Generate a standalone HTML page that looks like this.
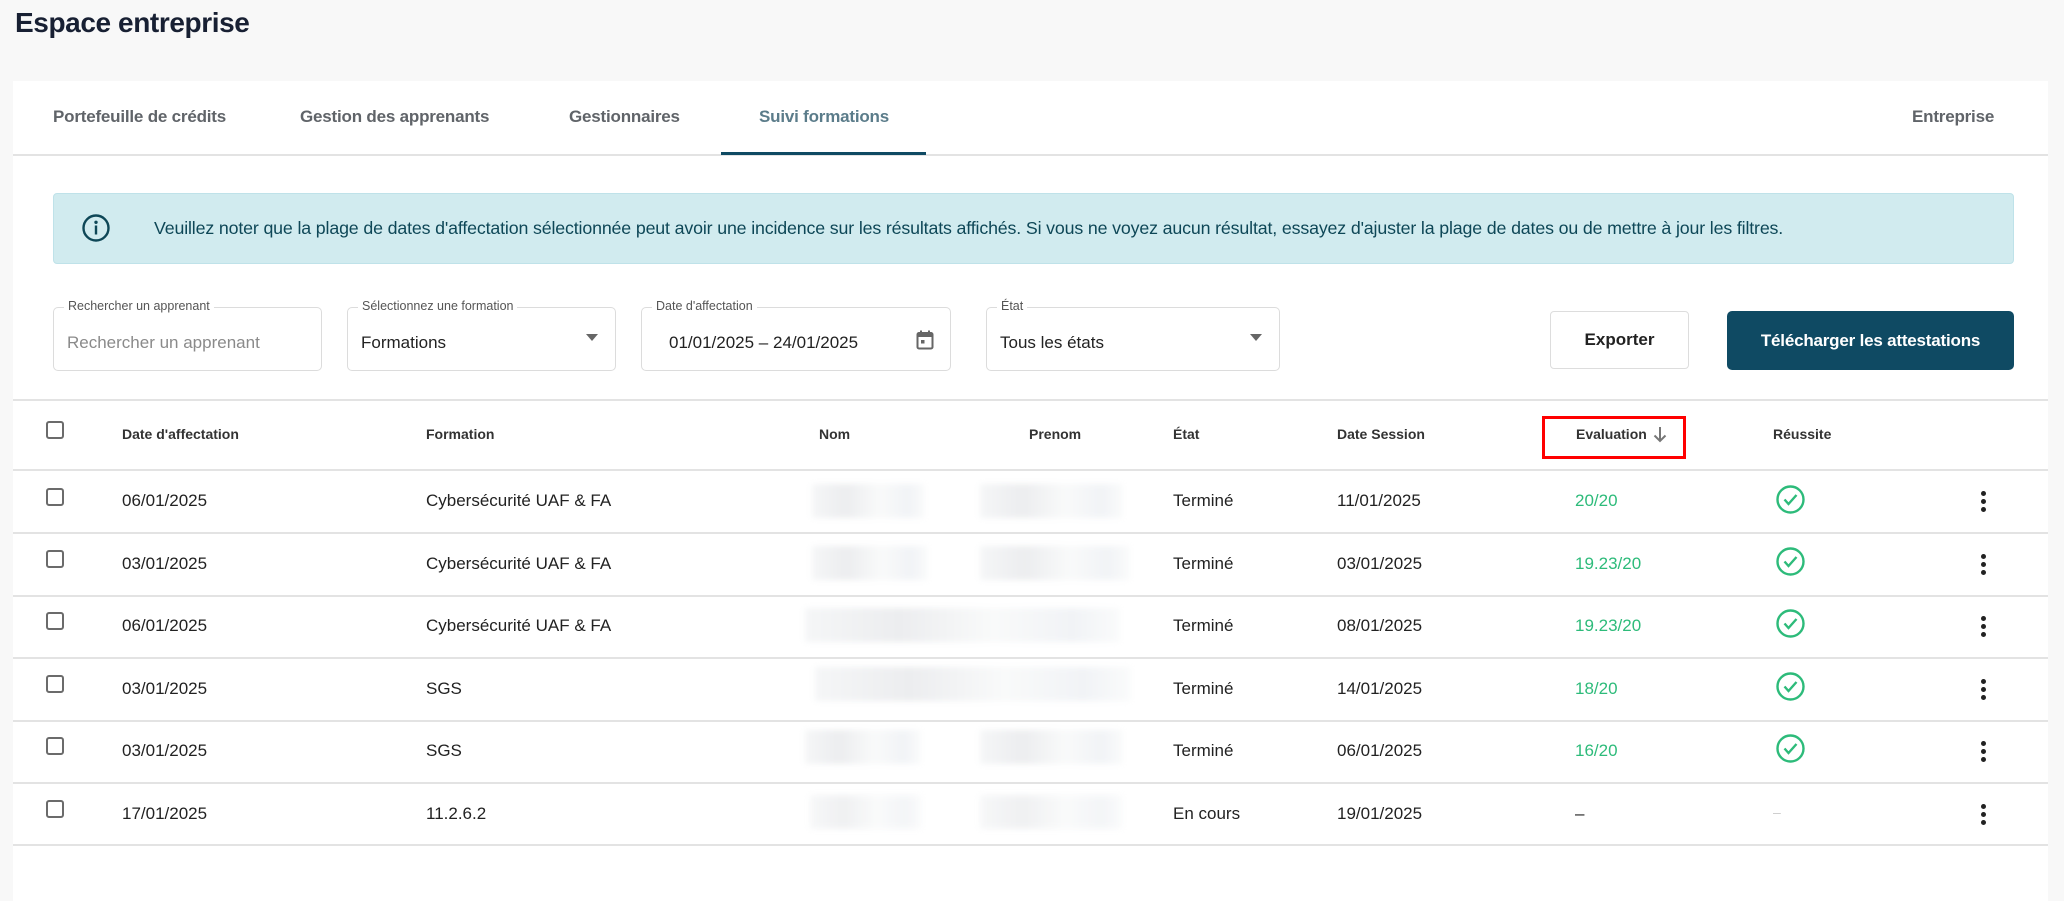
<!DOCTYPE html>
<html><head><meta charset="utf-8"><style>
*{box-sizing:border-box;margin:0;padding:0}
body{width:2064px;height:881px;background:#f8f8f8;font-family:"Liberation Sans",sans-serif;position:relative;overflow:hidden;color:#212121}
.a{position:absolute;white-space:nowrap}
.card{position:absolute;left:13px;top:81px;width:2035px;height:820px;background:#fff}
.tab{position:absolute;top:107px;font-size:17px;color:#606469;font-weight:bold;letter-spacing:-0.2px}
.box{position:absolute;top:307px;height:64px;border:1px solid #dcdcdc;border-radius:5px;background:#fff}
.lbl{position:absolute;top:-9px;left:10px;background:#fff;padding:0 4px;font-size:12.5px;color:#555}
.val{position:absolute;top:25px;left:13px;font-size:17px;color:#222}
.hd{position:absolute;top:426px;font-size:14px;font-weight:bold;color:#333}
.line{position:absolute;left:13px;width:2035px;height:2px;background:#e3e3e3}
.cell{position:absolute;font-size:17px;color:#222}
.cb{position:absolute;left:46px;width:18px;height:18px;border:2px solid #6b6b6b;border-radius:3px}
.g{color:#2dbb7a}
.blur{position:absolute;height:34px;background:linear-gradient(90deg,#f5f6f7,#ecedef 30%,#f9fafa 60%,#f1f3f6 85%,#fafbfb);filter:blur(3px)}
.dots{position:absolute;left:1981px;width:5px}
.dots i{display:block;width:5px;height:5px;border-radius:50%;background:#222;margin-bottom:3px}
</style></head><body>
<div class="a" style="left:15px;top:7px;font-size:28px;font-weight:bold;color:#182033;letter-spacing:-0.4px">Espace entreprise</div>
<div class="card"></div>
<div class="tab" style="left:53px">Portefeuille de crédits</div>
<div class="tab" style="left:300px">Gestion des apprenants</div>
<div class="tab" style="left:569px">Gestionnaires</div>
<div class="tab" style="left:759px;color:#5b7c8a">Suivi formations</div>
<div class="tab" style="left:1912px">Entreprise</div>
<div class="line" style="top:154px"></div>
<div class="a" style="left:721px;top:152px;width:205px;height:3px;background:#0f4a63"></div>

<div class="a" style="left:53px;top:193px;width:1961px;height:71px;background:#d1ebef;border:1px solid #bfe2e9;border-radius:4px"></div>
<svg class="a" style="left:81px;top:213px" width="30" height="30" viewBox="0 0 30 30"><circle cx="15" cy="15" r="12.5" fill="none" stroke="#0e4757" stroke-width="2.4"/><circle cx="15" cy="9.3" r="1.7" fill="#0e4757"/><rect x="13.8" y="12.5" width="2.4" height="9" fill="#0e4757"/></svg>
<div class="a" style="left:154px;top:218px;font-size:17.8px;color:#0e4757;letter-spacing:-0.15px">Veuillez noter que la plage de dates d'affectation sélectionnée peut avoir une incidence sur les résultats affichés. Si vous ne voyez aucun résultat, essayez d'ajuster la plage de dates ou de mettre à jour les filtres.</div>

<div class="box" style="left:53px;width:269px"><span class="lbl">Rechercher un apprenant</span><span class="val" style="color:#8a8a8a">Rechercher un apprenant</span></div>
<div class="box" style="left:347px;width:269px"><span class="lbl">Sélectionnez une formation</span><span class="val">Formations</span><span class="a" style="right:17px;top:26px;width:0;height:0;border-left:6px solid transparent;border-right:6px solid transparent;border-top:7px solid #666"></span></div>
<div class="box" style="left:641px;width:310px"><span class="lbl">Date d'affectation</span><span class="val" style="left:27px">01/01/2025 – 24/01/2025</span>
<svg class="a" style="left:274px;top:22px" width="18" height="20" viewBox="0 0 18 20"><rect x="1.5" y="3" width="15" height="15.5" rx="1.5" fill="none" stroke="#666" stroke-width="2"/><rect x="1.5" y="3" width="15" height="4" fill="#666"/><rect x="4" y="0.5" width="2" height="4" fill="#666"/><rect x="12" y="0.5" width="2" height="4" fill="#666"/><rect x="5" y="10" width="3.5" height="3.5" fill="#666"/></svg></div>
<div class="box" style="left:986px;width:294px"><span class="lbl">État</span><span class="val">Tous les états</span><span class="a" style="right:17px;top:26px;width:0;height:0;border-left:6px solid transparent;border-right:6px solid transparent;border-top:7px solid #666"></span></div>
<div class="a" style="left:1550px;top:311px;width:139px;height:58px;border:1px solid #ddd;border-radius:4px;font-size:17px;font-weight:bold;color:#222;text-align:center;line-height:56px">Exporter</div>
<div class="a" style="left:1727px;top:311px;width:287px;height:59px;background:#0f4a63;border-radius:5px;font-size:17px;font-weight:bold;color:#fff;text-align:center;line-height:59px;letter-spacing:-0.2px">Télécharger les attestations</div>

<div class="line" style="top:399px"></div>
<div class="cb" style="top:421px"></div>
<div class="hd" style="left:122px">Date d'affectation</div>
<div class="hd" style="left:426px">Formation</div>
<div class="hd" style="left:819px">Nom</div>
<div class="hd" style="left:1029px">Prenom</div>
<div class="hd" style="left:1173px">État</div>
<div class="hd" style="left:1337px">Date Session</div>
<div class="hd" style="left:1576px">Evaluation</div>
<svg class="a" style="left:1653px;top:426px" width="14" height="17" viewBox="0 0 14 17"><path d="M7 1v14M1.5 9.5L7 15l5.5-5.5" fill="none" stroke="#777" stroke-width="2"/></svg>
<div class="a" style="left:1542px;top:416px;width:144px;height:43px;border:3px solid #f00"></div>
<div class="hd" style="left:1773px">Réussite</div>
<div class="line" style="top:469px"></div>

<div class="cb" style="top:488px"></div><div class="cell" style="left:122px;top:491px">06/01/2025</div><div class="cell" style="left:426px;top:491px">Cybersécurité UAF &amp; FA</div>
<div class="blur" style="left:812px;top:484px;width:113px"></div><div class="blur" style="left:980px;top:484px;width:143px"></div>
<div class="cell" style="left:1173px;top:491px">Terminé</div><div class="cell" style="left:1337px;top:491px">11/01/2025</div><div class="cell g" style="left:1575px;top:491px">20/20</div>
<div class="dots" style="top:491px"><i></i><i></i><i></i></div>
<div class="line" style="top:532px"></div>

<div class="cb" style="top:550px"></div><div class="cell" style="left:122px;top:554px">03/01/2025</div><div class="cell" style="left:426px;top:554px">Cybersécurité UAF &amp; FA</div>
<div class="blur" style="left:812px;top:546px;width:116px"></div><div class="blur" style="left:980px;top:546px;width:150px"></div>
<div class="cell" style="left:1173px;top:554px">Terminé</div><div class="cell" style="left:1337px;top:554px">03/01/2025</div><div class="cell g" style="left:1575px;top:554px">19.23/20</div>
<div class="dots" style="top:554px"><i></i><i></i><i></i></div>
<div class="line" style="top:595px"></div>

<div class="cb" style="top:612px"></div><div class="cell" style="left:122px;top:616px">06/01/2025</div><div class="cell" style="left:426px;top:616px">Cybersécurité UAF &amp; FA</div>
<div class="blur" style="left:805px;top:608px;width:315px"></div>
<div class="cell" style="left:1173px;top:616px">Terminé</div><div class="cell" style="left:1337px;top:616px">08/01/2025</div><div class="cell g" style="left:1575px;top:616px">19.23/20</div>
<div class="dots" style="top:616px"><i></i><i></i><i></i></div>
<div class="line" style="top:657px"></div>

<div class="cb" style="top:675px"></div><div class="cell" style="left:122px;top:679px">03/01/2025</div><div class="cell" style="left:426px;top:679px">SGS</div>
<div class="blur" style="left:815px;top:667px;width:316px"></div>
<div class="cell" style="left:1173px;top:679px">Terminé</div><div class="cell" style="left:1337px;top:679px">14/01/2025</div><div class="cell g" style="left:1575px;top:679px">18/20</div>
<div class="dots" style="top:679px"><i></i><i></i><i></i></div>
<div class="line" style="top:720px"></div>

<div class="cb" style="top:737px"></div><div class="cell" style="left:122px;top:741px">03/01/2025</div><div class="cell" style="left:426px;top:741px">SGS</div>
<div class="blur" style="left:805px;top:730px;width:116px"></div><div class="blur" style="left:980px;top:730px;width:143px"></div>
<div class="cell" style="left:1173px;top:741px">Terminé</div><div class="cell" style="left:1337px;top:741px">06/01/2025</div><div class="cell g" style="left:1575px;top:741px">16/20</div>
<div class="dots" style="top:741px"><i></i><i></i><i></i></div>
<div class="line" style="top:782px"></div>

<div class="cb" style="top:800px"></div><div class="cell" style="left:122px;top:804px">17/01/2025</div><div class="cell" style="left:426px;top:804px">11.2.6.2</div>
<div class="blur" style="left:810px;top:795px;width:112px;opacity:.8"></div><div class="blur" style="left:980px;top:795px;width:143px;opacity:.8"></div>
<div class="cell" style="left:1173px;top:804px">En cours</div><div class="cell" style="left:1337px;top:804px">19/01/2025</div><div class="cell" style="left:1575px;top:804px">–</div><div class="cell" style="left:1773px;top:804px;color:#ccc;font-size:14px">–</div>
<div class="dots" style="top:804px"><i></i><i></i><i></i></div>
<div class="line" style="top:844px"></div>

<svg class="a" style="left:1775px;top:484px" width="31" height="31" viewBox="0 0 31 31"><circle cx="15.5" cy="15.5" r="13" fill="none" stroke="#2dbb7a" stroke-width="2.4"/><path d="M9.5 15.5l4 4.5 8-9" fill="none" stroke="#2dbb7a" stroke-width="2.4"/></svg>
<svg class="a" style="left:1775px;top:546px" width="31" height="31" viewBox="0 0 31 31"><circle cx="15.5" cy="15.5" r="13" fill="none" stroke="#2dbb7a" stroke-width="2.4"/><path d="M9.5 15.5l4 4.5 8-9" fill="none" stroke="#2dbb7a" stroke-width="2.4"/></svg>
<svg class="a" style="left:1775px;top:608px" width="31" height="31" viewBox="0 0 31 31"><circle cx="15.5" cy="15.5" r="13" fill="none" stroke="#2dbb7a" stroke-width="2.4"/><path d="M9.5 15.5l4 4.5 8-9" fill="none" stroke="#2dbb7a" stroke-width="2.4"/></svg>
<svg class="a" style="left:1775px;top:671px" width="31" height="31" viewBox="0 0 31 31"><circle cx="15.5" cy="15.5" r="13" fill="none" stroke="#2dbb7a" stroke-width="2.4"/><path d="M9.5 15.5l4 4.5 8-9" fill="none" stroke="#2dbb7a" stroke-width="2.4"/></svg>
<svg class="a" style="left:1775px;top:733px" width="31" height="31" viewBox="0 0 31 31"><circle cx="15.5" cy="15.5" r="13" fill="none" stroke="#2dbb7a" stroke-width="2.4"/><path d="M9.5 15.5l4 4.5 8-9" fill="none" stroke="#2dbb7a" stroke-width="2.4"/></svg>
</body></html>
